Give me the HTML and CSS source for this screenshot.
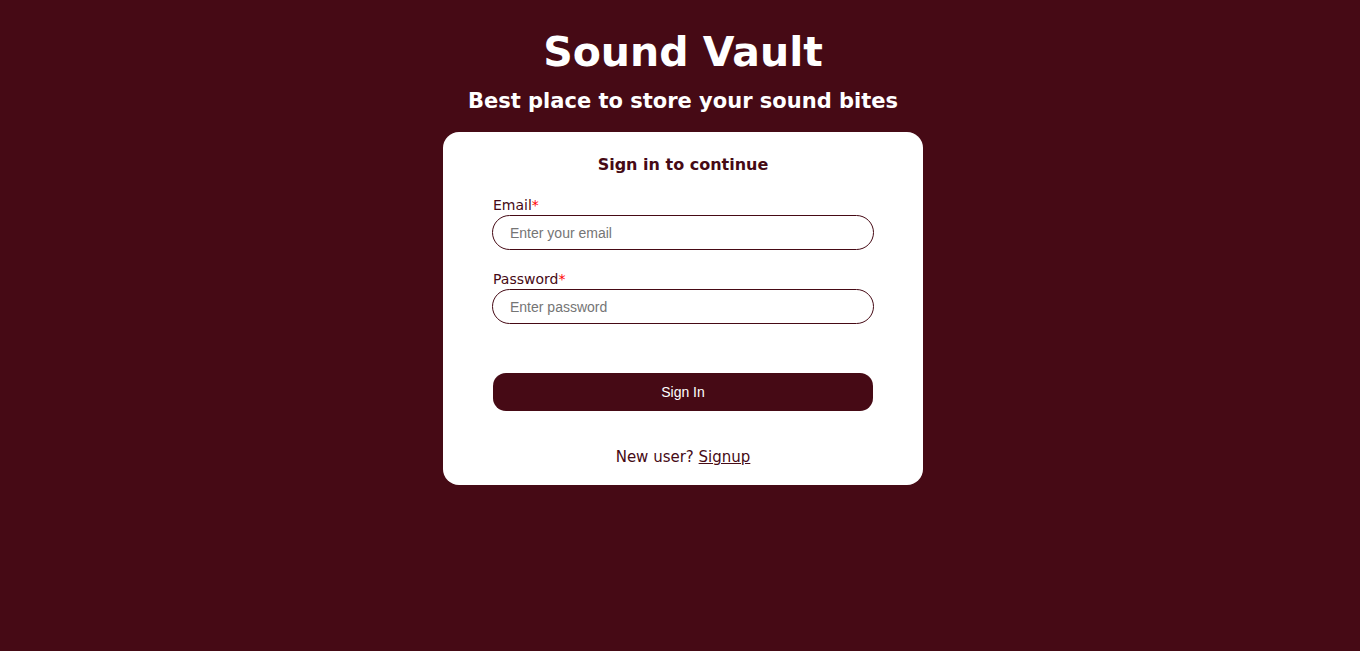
FILE: index.html
```html
<!DOCTYPE html>
<html>
<head>
<meta charset="utf-8">
<link rel="stylesheet" href="styles.css">
</head>
<body>
<main class="page">
  <h1 class="title">Sound Vault</h1>
  <h2 class="subtitle">Best place to store your sound bites</h2>
  <section class="card">
    <h3 class="card-title">Sign in to continue</h3>
    <form class="form">
      <label class="field">
        <span class="label">Email<span class="req">*</span></span>
        <input class="input" type="email" placeholder="Enter your email">
      </label>
      <label class="field">
        <span class="label">Password<span class="req">*</span></span>
        <input class="input" type="password" placeholder="Enter password">
      </label>
      <button class="btn" type="button">Sign In</button>
    </form>
    <p class="footer">New user? <a class="link" href="#">Signup</a></p>
  </section>
</main>
</body>
</html>
```
FILE: styles.css
```css
html, body {
  margin: 0;
  padding: 0;
  background: #460a15;
}
body {
  font-family: "Comic Sans MS", "DejaVu Sans", sans-serif;
}
.page {
  display: flex;
  flex-direction: column;
  align-items: center;
  padding-top: 24px;
  padding-left: 6px;
}
.title {
  margin: 0;
  color: #fff;
  font-size: 41px;
  line-height: 56px;
  font-weight: bold;
}
.subtitle {
  margin: 5px 0 0;
  color: #fff;
  font-size: 21px;
  line-height: 32px;
  font-weight: bold;
}
.card {
  margin-top: 15px;
  width: 480px;
  box-sizing: border-box;
  background: #fff;
  border-radius: 16px;
  padding: 20px 49px 17px;
  display: flex;
  flex-direction: column;
}
.card-title {
  margin: 0;
  text-align: center;
  color: #460a15;
  font-size: 16px;
  line-height: 26px;
  font-weight: bold;
}
.form {
  display: flex;
  flex-direction: column;
  margin-top: 17px;
}
.field {
  display: flex;
  flex-direction: column;
  margin-bottom: 19px;
}
.field:last-of-type {
  margin-bottom: 14px;
}
.label {
  color: #460a15;
  font-size: 14px;
  line-height: 20px;
  padding-left: 1px;
}
.req {
  color: #ff0000;
}
.input {
  box-sizing: border-box;
  width: 382px;
  height: 35px;
  border: 1px solid #460a15;
  border-radius: 18px;
  padding: 0 17px;
  font-family: "Liberation Sans", Arial, sans-serif;
  font-size: 14px;
  color: #222;
  outline: none;
}
.input::placeholder {
  color: #757575;
}
.btn {
  margin: 35px 1px 0;
  height: 38px;
  border: none;
  border-radius: 13px;
  background: #460a15;
  color: #fff;
  font-family: "Liberation Sans", Arial, sans-serif;
  font-size: 14px;
}
.footer {
  margin: 35px 0 0;
  text-align: center;
  color: #460a15;
  font-size: 15px;
  line-height: 22px;
}
.link {
  color: #460a15;
  text-decoration: underline;
}
```
